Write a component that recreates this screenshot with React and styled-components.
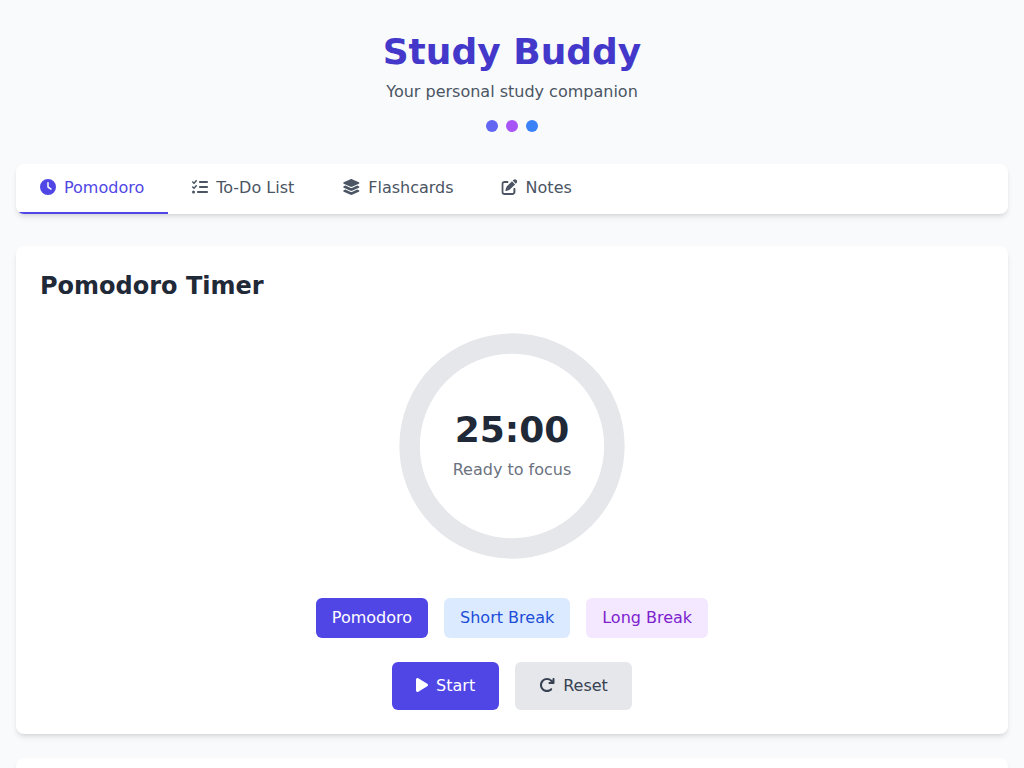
import React from 'react';
import styled, { createGlobalStyle } from 'styled-components';
import { FaClock, FaListCheck, FaLayerGroup, FaPenToSquare, FaPlay, FaArrowRotateRight } from 'react-icons/fa6';

const GlobalStyle = createGlobalStyle`
  *, *::before, *::after { box-sizing: border-box; }
  html, body { margin: 0; height: 100%; overflow: hidden; }
  body {
    background: #f9fafb;
    color: #1f2937;
    font-family: "DejaVu Sans", sans-serif;
    font-size: 16px;
    line-height: 24px;
  }
  h1, h2, p { margin: 0; }
  button { font: inherit; border: 0; margin: 0; cursor: pointer; }
`;

const Page = styled.div`
  padding: 32px 16px;
`;

const Header = styled.header`
  display: flex;
  flex-direction: column;
  align-items: center;
  margin-bottom: 32px;
`;

const Title = styled.h1`
  font-size: 36px;
  line-height: 40px;
  font-weight: 700;
  color: #4338ca;
  margin-bottom: 8px;
`;

const Tagline = styled.p`
  color: #4b5563;
`;

const Dots = styled.div`
  display: flex;
  gap: 8px;
  margin-top: 16px;
`;

const Dot = styled.span`
  width: 12px;
  height: 12px;
  border-radius: 50%;
  background: ${({ $color }) => $color};
`;

const Card = styled.section`
  background: #fff;
  border-radius: 8px;
  box-shadow: 0 4px 6px -1px rgba(0, 0, 0, 0.1), 0 2px 4px -2px rgba(0, 0, 0, 0.1);
`;

const TabBar = styled(Card).attrs({ as: 'nav' })`
  display: flex;
  overflow: hidden;
  margin-bottom: 32px;
`;

const Tab = styled.button`
  display: flex;
  padding: 12px 24px;
  background: none;
  color: ${({ $active }) => ($active ? '#4f46e5' : '#4b5563')};
  border-bottom: 2px solid ${({ $active }) => ($active ? '#4f46e5' : 'transparent')};
`;

const IconSlot = styled.span`
  display: flex;
  flex: none;
  margin: 3px 8px 0 0;
  width: ${({ $width }) => $width || 16}px;
  height: 16px;
  svg {
    display: block;
    flex: none;
    height: 16px;
    width: ${({ $width }) => $width || 16}px;
    transform: ${({ $nudge }) => ($nudge ? `translateX(${$nudge}px)` : 'none')};
  }
`;

const Panel = styled(Card)`
  padding: 24px;
  margin-bottom: 24px;
`;

const PanelTitle = styled.h2`
  font-size: 24px;
  line-height: 32px;
  font-weight: 700;
  margin-bottom: 16px;
`;

const TimerColumn = styled.div`
  display: flex;
  flex-direction: column;
  align-items: center;
`;

const Dial = styled.div`
  display: grid;
  place-items: center;
  width: 256px;
  height: 256px;
  margin-bottom: 24px;
  > * { grid-area: 1 / 1; }
`;

const Readout = styled.div`
  text-align: center;
`;

const Time = styled.div`
  font-size: 36px;
  line-height: 40px;
  font-weight: 700;
`;

const Status = styled.div`
  color: #6b7280;
  margin-top: 8px;
`;

const ButtonRow = styled.div`
  display: flex;
  gap: 16px;
  margin-bottom: ${({ $last }) => ($last ? 0 : 24)}px;
`;

const ModeButton = styled.button`
  padding: 8px 16px;
  border-radius: 6px;
  color: ${({ $color }) => $color};
  background: ${({ $background }) => $background};
`;

const ActionButton = styled(ModeButton)`
  display: flex;
  padding: 12px 24px;
`;

const tabs = [
  { label: 'Pomodoro', Icon: FaClock, active: true },
  { label: 'To-Do List', Icon: FaListCheck },
  { label: 'Flashcards', Icon: FaLayerGroup, width: 18, nudge: 0.3 },
  { label: 'Notes', Icon: FaPenToSquare, nudge: -0.6 },
];

export default function App() {
  return (
    <Page>
      <GlobalStyle />
      <Header>
        <Title>Study Buddy</Title>
        <Tagline>Your personal study companion</Tagline>
        <Dots>
          <Dot $color="#6366f1" />
          <Dot $color="#a855f7" />
          <Dot $color="#3b82f6" />
        </Dots>
      </Header>
      <TabBar>
        {tabs.map(({ label, Icon, active, width, nudge }) => (
          <Tab key={label} $active={active}>
            <IconSlot $width={width} $nudge={nudge}><Icon /></IconSlot>
            {label}
          </Tab>
        ))}
      </TabBar>
      <Panel>
        <PanelTitle>Pomodoro Timer</PanelTitle>
        <TimerColumn>
          <Dial>
            <svg width="256" height="256" viewBox="0 0 100 100">
              <circle cx="50" cy="50" r="40" fill="none" stroke="#e5e7eb" strokeWidth="8" />
            </svg>
            <Readout>
              <Time>25:00</Time>
              <Status>Ready to focus</Status>
            </Readout>
          </Dial>
          <ButtonRow>
            <ModeButton $color="#fff" $background="#4f46e5">Pomodoro</ModeButton>
            <ModeButton $color="#1d4ed8" $background="#dbeafe">Short Break</ModeButton>
            <ModeButton $color="#7e22ce" $background="#f3e8ff">Long Break</ModeButton>
          </ButtonRow>
          <ButtonRow $last>
            <ActionButton $color="#fff" $background="#4f46e5">
              <IconSlot $width={12}><FaPlay /></IconSlot>
              Start
            </ActionButton>
            <ActionButton $color="#374151" $background="#e5e7eb">
              <IconSlot><FaArrowRotateRight /></IconSlot>
              Reset
            </ActionButton>
          </ButtonRow>
        </TimerColumn>
      </Panel>
      <Panel />
    </Page>
  );
}
